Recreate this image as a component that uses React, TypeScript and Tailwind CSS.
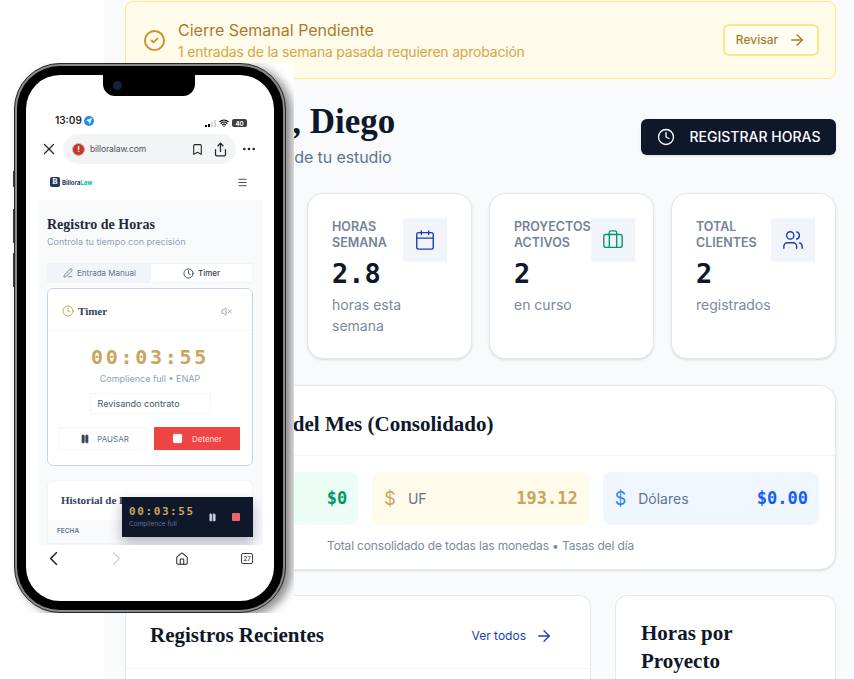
import {
  ArrowRight,
  Bookmark,
  Briefcase,
  Calendar,
  ChevronLeft,
  ChevronRight,
  CircleCheck,
  Clock,
  Ellipsis,
  House,
  Menu,
  Pause,
  PenLine,
  Send,
  Share,
  Square,
  Users,
  VolumeX,
  Wifi,
  X,
} from "lucide-react"

const serif = "[font-family:'Liberation_Serif',serif]"
const mono = "[font-family:'DejaVu_Sans_Mono',monospace]"

function StatCard({
  label,
  value,
  note,
  icon,
}: {
  label: string[]
  value: string
  note: string
  icon: React.ReactNode
}) {
  return (
    <div className="flex h-[166px] rounded-2xl border border-slate-200 bg-white px-6 py-6 shadow-sm">
      <div className="flex-1">
        <div className="pt-[1px] text-[12.5px] leading-4 font-semibold text-[#748399]">
          {label.map((l) => (
            <div key={l}>{l}</div>
          ))}
        </div>
        <div className={`${mono} mt-1 text-[27px] leading-[38px] font-bold text-[#0f172a]`}>{value}</div>
        <div className="mt-[1px] text-sm leading-[21px] text-[#7a8aa0]">{note}</div>
      </div>
      <div className="flex h-11 w-11 shrink-0 items-center justify-center bg-[#f1f5f9]">{icon}</div>
    </div>
  )
}

function CurrencyTile({
  tile,
  sign,
  name,
  amount,
  amountColor,
}: {
  tile: string
  sign: string
  name: string
  amount: string
  amountColor: string
}) {
  return (
    <div className={`flex h-[53px] items-center rounded-lg pr-[11px] pl-3 ${tile}`}>
      <span className={`text-lg ${sign}`}>$</span>
      <span className="ml-3 text-sm text-slate-500">{name}</span>
      <span className={`${mono} ml-auto text-[17px] font-bold ${amountColor}`}>{amount}</span>
    </div>
  )
}

function Phone() {
  return (
    <div className="absolute top-[63px] left-0 h-[550px] w-[294px] overflow-hidden bg-white">
      <div className="absolute top-[108px] left-[13px] h-4 w-[2px] bg-neutral-700" />
      <div className="absolute top-[146px] left-[13px] h-[34px] w-[2px] bg-neutral-700" />
      <div className="absolute top-[190px] left-[13px] h-[34px] w-[2px] bg-neutral-700" />
      <div className="absolute top-[156px] left-[284px] h-[50px] w-[2px] bg-neutral-700" />
      <div className="absolute top-0 left-[14px] h-[550px] w-[272px] rounded-[46px] border border-neutral-800 bg-[#8a8a8a] p-[2px] shadow-[6px_3px_10px_rgba(0,0,0,0.45)]">
        <div className="h-full w-full rounded-[43px] bg-black p-[9px]">
          <div className="relative flex h-full w-full flex-col overflow-hidden rounded-[34px] bg-white">
            <div className="absolute top-0 left-[77px] flex h-[21px] w-[92px] items-center rounded-b-xl bg-black pl-[10px]">
              <div className="h-[9px] w-[9px] rounded-full bg-[#16213f]" />
            </div>

            <div className="flex h-[58px] shrink-0 items-end justify-between pr-[27px] pb-[5px] pl-[29px]">
              <div className="flex items-center gap-[2px] text-[10px] font-semibold text-neutral-800">
                13:09
                <span className="flex h-[10px] w-[10px] items-center justify-center rounded-full bg-[#1d8fe8]">
                  <Send size={6} className="text-white" fill="white" />
                </span>
              </div>
              <div className="flex items-center gap-[3px]">
                <div className="flex items-end gap-[1px]">
                  <div className="h-[2px] w-[2px] bg-black" />
                  <div className="h-[3px] w-[2px] bg-black" />
                  <div className="h-[5px] w-[2px] bg-neutral-300" />
                  <div className="h-[7px] w-[2px] bg-neutral-300" />
                </div>
                <Wifi size={10} strokeWidth={3} className="text-black" />
                <div className="flex h-[8px] w-[15px] items-center justify-center rounded-[2px] bg-neutral-700 text-[6px] font-bold text-white">
                  40
                </div>
              </div>
            </div>

            <div className="mt-[1px] flex h-[30px] shrink-0 items-center pl-[14px]">
              <X size={18} strokeWidth={1.75} className="text-neutral-800" />
              <div className="ml-[5px] flex h-[30px] w-[173px] items-center rounded-full bg-[#f3f4f6] px-[9px]">
                <div className="flex h-[13px] w-[13px] items-center justify-center rounded-full border border-[#e5a9a3] bg-[#c0392b] text-[8px] font-bold text-white">
                  !
                </div>
                <span className="ml-[5px] text-[8.5px] tracking-[-0.1px] text-neutral-600">billoralaw.com</span>
                <Bookmark size={13} className="mr-[-2px] ml-auto text-neutral-800" />
                <Share size={15} className="mr-[-1px] ml-[11px] text-neutral-800" />
              </div>
              <Ellipsis size={16} className="ml-[5px] text-neutral-800" />
            </div>

            <div className="flex h-[36px] shrink-0 items-center justify-between pr-[26px] pl-[24px]">
              <div className="flex items-center gap-[2px]">
                <div className={`${serif} flex h-[10px] w-[10px] items-center justify-center rounded-[2px] bg-[#1e3a5f] text-[8px] font-bold text-white`}>
                  B
                </div>
                <span className="text-[6px] font-bold text-[#1e3a5f]">
                  Billora<span className="text-teal-500">Law</span>
                </span>
              </div>
              <Menu size={11} className="text-neutral-700" />
            </div>

            <div className="relative mx-[11px] flex min-h-0 flex-1 flex-col overflow-hidden bg-[#f8fafc] px-[10px] pt-[16px]">
              <h2 className={`${serif} text-[14px] leading-[18px] font-bold text-[#1e293b]`}>Registro de Horas</h2>
              <p className="mt-[2px] text-[9px] leading-3 text-slate-400">Controla tu tiempo con precisión</p>

              <div className="mt-[15px] flex h-[20px] shrink-0 items-center bg-[#f1f5f9] px-[1px] text-[8px]">
                <div className="flex h-[18px] flex-1 items-center justify-center gap-[4px] text-slate-500">
                  <PenLine size={10} />
                  Entrada Manual
                </div>
                <div className="flex h-[18px] w-[101px] items-center justify-center gap-[4px] bg-white font-medium text-slate-700">
                  <Clock size={11} />
                  Timer
                </div>
              </div>

              <div className="mt-[5px] shrink-0 rounded-md border border-slate-300 bg-white">
                <div className="flex h-[42px] items-center justify-between border-b border-slate-100 pt-[3px] pr-[20px] pl-[14px]">
                  <div className="flex items-center gap-[4px]">
                    <Clock size={12} className="text-[#c9a45c]" />
                    <span className={`${serif} text-[11px] font-bold text-slate-700`}>Timer</span>
                  </div>
                  <VolumeX size={11} className="text-slate-400" />
                </div>
                <div className="flex flex-col items-center pt-[12px] pb-[15px]">
                  <div className={`${mono} text-[20px] leading-7 font-bold tracking-[2.7px] text-[#c9a45c]`}>00:03:55</div>
                  <div className="mt-[2px] text-[9px] leading-3 text-slate-400">Complience full • ENAP</div>
                  <div className="mt-[8px] flex h-[21px] w-[121px] items-center border border-slate-100 px-[7px] text-[9px] text-slate-600">
                    Revisando contrato
                  </div>
                  <div className="mt-[13px] flex w-full gap-[7px] px-[11px]">
                    <div className="flex h-[23px] w-[88px] items-center justify-center gap-[7px] border border-slate-100 pl-[3px] text-[8px] text-slate-500">
                      <Pause size={10} className="text-slate-700" fill="currentColor" />
                      PAUSAR
                    </div>
                    <div className="flex h-[23px] w-[86px] items-center justify-center gap-[9px] bg-[#ef4444] text-[8px] text-red-100">
                      <Square size={11} className="text-white" fill="white" />
                      Detener
                    </div>
                  </div>
                </div>
              </div>

              <div className="mt-[14px] flex-1 rounded-t-md border border-slate-100 bg-white">
                <div className="flex h-[39px] items-center pl-[13px]">
                  <span className={`${serif} text-[11px] font-bold whitespace-nowrap text-slate-700`}>Historial de Registros</span>
                </div>
                <div className="flex h-[24px] items-center border-b border-slate-100 bg-[#f8fafc] pl-[9px] text-[6.5px] font-semibold text-slate-500">
                  FECHA
                </div>
              </div>

              <div className="absolute top-[297px] right-[10px] flex h-10 w-[131px] items-center bg-[#0f172a] pr-[13px] pl-[7px] shadow-[0_6px_12px_rgba(15,23,42,0.3)]">
                <div>
                  <div className={`${mono} text-[11px] leading-[14px] font-bold tracking-[1.6px] text-[#c9a45c]`}>00:03:55</div>
                  <div className="text-[6.5px] leading-[10px] text-slate-500">Complience full</div>
                </div>
                <Pause size={9} className="ml-auto text-slate-300" fill="currentColor" />
                <div className="ml-[15px] h-2 w-2 rounded-[1px] bg-[#f0616d]" />
              </div>
            </div>

            <div className="flex h-[56px] shrink-0 items-start pt-[2px] pl-[16px] text-neutral-800">
              <ChevronLeft size={23} strokeWidth={1.75} />
              <ChevronRight size={23} strokeWidth={1.5} className="ml-[40px] text-neutral-300" />
              <House size={14} strokeWidth={1.75} className="mt-[5px] ml-[47px]" />
              <div className="mt-[6px] ml-[52px] flex h-[11px] w-[12px] items-center justify-center rounded-[2px] border border-neutral-700 text-[6px] font-medium">
                27
              </div>
            </div>
          </div>
        </div>
      </div>
    </div>
  )
}

export default function App() {
  return (
    <div className="relative h-[679px] w-[854px] overflow-hidden bg-white [font-family:Inter,sans-serif]">
      <main className="ml-[104px] h-full bg-[#f8fafc] pt-[1px] pr-[18px] pl-[21px]">
        <div className="flex h-[78px] items-center rounded-lg border border-amber-200 bg-[#fffbeb] pr-4 pl-[17px]">
          <CircleCheck size={23} className="text-[#c9952b]" />
          <div className="ml-[12px]">
            <div className="text-[16px] leading-6 text-[#a67c2d]">Cierre Semanal Pendiente</div>
            <div className="text-sm leading-5 tracking-[-0.2px] text-[#d6a545]">1 entradas de la semana pasada requieren aprobación</div>
          </div>
          <button className="ml-auto flex h-8 w-24 items-center justify-center gap-[10px] rounded-md border-2 border-amber-200 bg-[#fffdf2] text-xs font-medium text-[#a67c2d]">
            Revisar
            <ArrowRight size={18} strokeWidth={1.75} />
          </button>
        </div>

        <div className="mt-[20px] flex h-[70px] items-center justify-between">
          <div>
            <h1 className={`${serif} text-[35px] leading-[44px] font-bold text-[#0f172a]`}>Bienvenido, Diego</h1>
            <p className="mt-[1px] text-base leading-6 tracking-[-0.1px] text-slate-500">Resumen de actividad de tu estudio</p>
          </div>
          <button className="mt-1.5 flex h-9 w-[195px] items-center justify-center gap-[15px] rounded-md bg-[#0f172a] text-sm font-medium text-white shadow-sm">
            <Clock size={18} strokeWidth={1.75} />
            REGISTRAR HORAS
          </button>
        </div>

        <div className="mt-[24px] grid grid-cols-4 gap-[17px]">
          <StatCard label={["HORAS", "HOY"]} value="0" note="horas" icon={<Clock size={22} strokeWidth={1.5} className="text-blue-800" />} />
          <StatCard label={["HORAS", "SEMANA"]} value="2.8" note="horas esta semana" icon={<Calendar size={22} strokeWidth={1.5} className="text-blue-800" />} />
          <StatCard label={["PROYECTOS", "ACTIVOS"]} value="2" note="en curso" icon={<Briefcase size={22} strokeWidth={1.5} className="text-emerald-600" />} />
          <StatCard label={["TOTAL", "CLIENTES"]} value="2" note="registrados" icon={<Users size={22} strokeWidth={1.5} className="text-blue-800" />} />
        </div>

        <section className="mt-[26px] h-[185px] rounded-2xl border border-slate-200 bg-white shadow-sm">
          <div className="flex h-[70px] items-center border-b border-slate-100 pt-2 pl-7">
            <h3 className={`${serif} text-[21px] font-bold text-[#0f172a]`}>Resumen Total del Mes (Consolidado)</h3>
          </div>
          <div className="mt-4 grid grid-cols-3 gap-[14px] px-4">
            <CurrencyTile tile="bg-[#ecfdf5]" sign="text-emerald-500" name="Pesos" amount="$0" amountColor="text-emerald-600" />
            <CurrencyTile tile="bg-[#fefbeb]" sign="text-[#c9a45c]" name="UF" amount="193.12" amountColor="text-[#c9a45c]" />
            <CurrencyTile tile="bg-[#eff6ff]" sign="text-blue-500" name="Dólares" amount="$0.00" amountColor="text-blue-600" />
          </div>
          <p className="mt-[13px] text-center text-xs tracking-[-0.15px] text-[#7a8aa0]">Total consolidado de todas las monedas • Tasas del día</p>
        </section>

        <div className="mt-[25px] grid grid-cols-[466px_221px] gap-6">
          <section className="h-[120px] rounded-xl border border-slate-200 bg-white">
            <div className="flex h-[73px] items-center justify-between border-b border-slate-100 pt-[7px] pr-[37px] pl-6">
              <h3 className={`${serif} text-[21px] font-bold text-[#0f172a]`}>Registros Recientes</h3>
              <a className="flex items-center gap-[9px] text-xs text-blue-800">
                Ver todos
                <ArrowRight size={18} strokeWidth={1.75} />
              </a>
            </div>
          </section>
          <section className="h-[120px] rounded-xl border border-slate-200 bg-white px-[25px] pt-[23px]">
            <h3 className={`${serif} text-[21px] leading-7 font-bold text-[#0f172a]`}>Horas por Proyecto</h3>
          </section>
        </div>
      </main>
      <Phone />
    </div>
  )
}
